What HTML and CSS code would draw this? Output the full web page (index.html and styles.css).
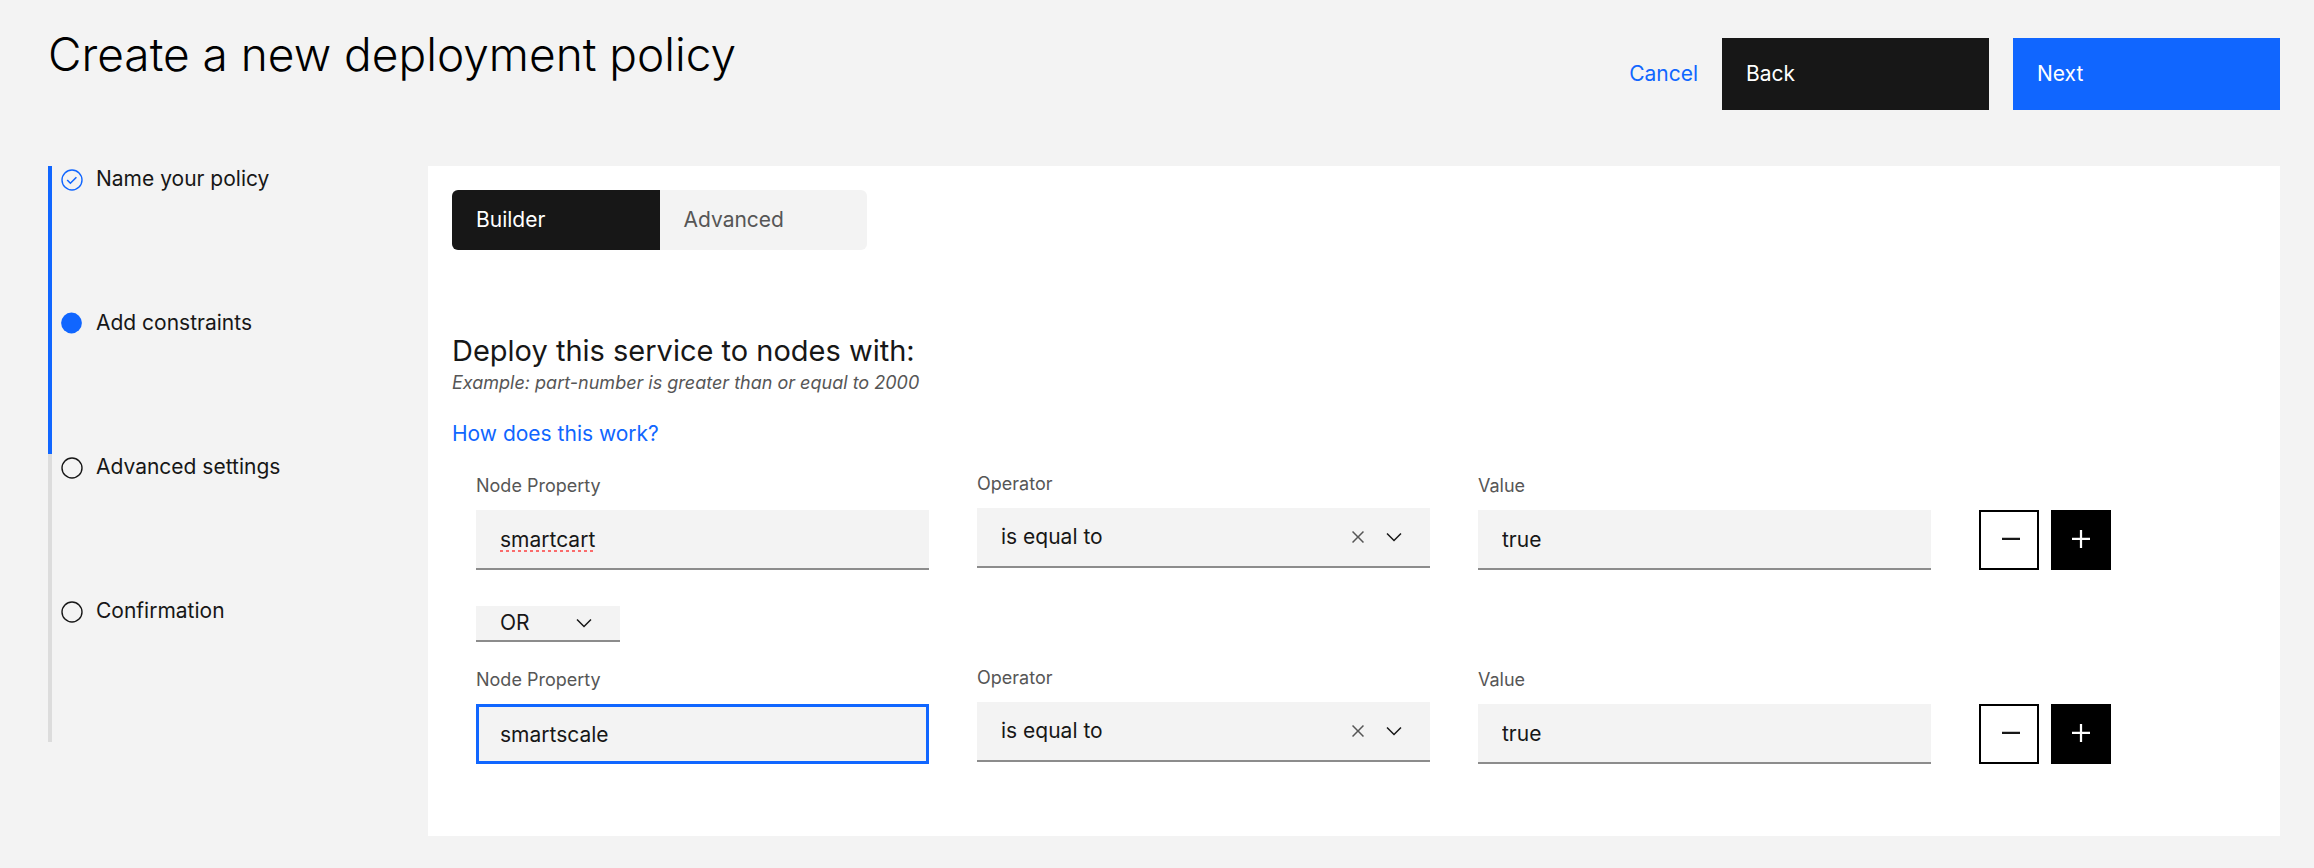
FILE: index.html
```html
<!DOCTYPE html>
<html lang="en">
<head>
<meta charset="utf-8">
<title>Create a new deployment policy</title>
<link rel="stylesheet" href="styles.css">
</head>
<body>
<svg class="sprite" aria-hidden="true">
  <symbol id="chevron" viewBox="0 0 16 16"><path d="M8 11L3 6l.7-.7L8 9.6l4.3-4.3.7.7z"/></symbol>
  <symbol id="close" viewBox="0 0 32 32"><path d="M24 9.4L22.6 8 16 14.6 9.4 8 8 9.4l6.6 6.6L8 22.6 9.4 24l6.6-6.6 6.6 6.6 1.4-1.4-6.6-6.6z"/></symbol>
  <symbol id="minus" viewBox="0 0 32 32"><path d="M8 14h16v2H8z"/></symbol>
  <symbol id="plus" viewBox="0 0 32 32"><path d="M17 14V7h-2v7H8v2h7v7h2v-7h7v-2z"/></symbol>
</svg>
<header class="page-header">
  <h1 class="page-title">Create a new deployment policy</h1>
  <div class="page-actions">
    <a class="link" href="#">Cancel</a>
    <button class="button button-secondary" type="button">Back</button>
    <button class="button button-primary" type="button">Next</button>
  </div>
</header>
<div class="page-body">
  <ol class="steps">
    <li class="step step-reached">
      <svg class="step-icon" viewBox="0 0 22 22"><circle cx="11" cy="11" r="10" fill="none" stroke="currentColor" stroke-width="1.4"/><path d="M6.2 11l3.2 3.2 6-6" fill="none" stroke="currentColor" stroke-width="1.6"/></svg>
      <span class="step-label">Name your policy</span>
    </li>
    <li class="step step-reached" aria-current="step">
      <svg class="step-icon" viewBox="0 0 22 22"><circle cx="10.5" cy="10" r="10.4" fill="currentColor"/></svg>
      <span class="step-label">Add constraints</span>
    </li>
    <li class="step">
      <svg class="step-icon" viewBox="0 0 22 22"><circle cx="11" cy="11" r="10" fill="none" stroke="currentColor" stroke-width="1.4"/></svg>
      <span class="step-label">Advanced settings</span>
    </li>
    <li class="step">
      <svg class="step-icon" viewBox="0 0 22 22"><circle cx="11" cy="11" r="10" fill="none" stroke="currentColor" stroke-width="1.4"/></svg>
      <span class="step-label">Confirmation</span>
    </li>
  </ol>
  <main class="panel">
    <div class="switcher" role="tablist">
      <button class="switch switch-selected" type="button" role="tab" aria-selected="true">Builder</button>
      <button class="switch" type="button" role="tab" aria-selected="false">Advanced</button>
    </div>
    <h2 class="panel-title">Deploy this service to nodes with:</h2>
    <p class="panel-example">Example: part-number is greater than or equal to 2000</p>
    <a class="link" href="#">How does this work?</a>
    <form class="constraints">
      <div class="constraint">
        <div class="field">
          <label class="field-label" for="property-1">Node Property</label>
          <input class="control control-misspelled" id="property-1" type="text" value="smartcart" spellcheck="false">
        </div>
        <div class="field field-select">
          <label class="field-label" for="operator-1">Operator</label>
          <div class="select">
            <select class="control" id="operator-1"><option>is equal to</option></select>
            <div class="select-icons">
              <button class="clear" type="button" aria-label="Clear selection"><svg class="icon"><use href="#close"/></svg></button>
              <svg class="icon"><use href="#chevron"/></svg>
            </div>
          </div>
        </div>
        <div class="field">
          <label class="field-label" for="value-1">Value</label>
          <input class="control" id="value-1" type="text" value="true">
        </div>
        <div class="row-actions">
          <button class="square square-outline" type="button" aria-label="Remove"><svg class="square-icon"><use href="#minus"/></svg></button>
          <button class="square square-solid" type="button" aria-label="Add"><svg class="square-icon"><use href="#plus"/></svg></button>
        </div>
      </div>
      <div class="select select-small">
        <select class="control" aria-label="Join constraints with"><option>OR</option><option>AND</option></select>
        <div class="select-icons"><svg class="icon"><use href="#chevron"/></svg></div>
      </div>
      <div class="constraint">
        <div class="field">
          <label class="field-label" for="property-2">Node Property</label>
          <input class="control control-active" id="property-2" type="text" value="smartscale" spellcheck="false">
        </div>
        <div class="field field-select">
          <label class="field-label" for="operator-2">Operator</label>
          <div class="select">
            <select class="control" id="operator-2"><option>is equal to</option></select>
            <div class="select-icons">
              <button class="clear" type="button" aria-label="Clear selection"><svg class="icon"><use href="#close"/></svg></button>
              <svg class="icon"><use href="#chevron"/></svg>
            </div>
          </div>
        </div>
        <div class="field">
          <label class="field-label" for="value-2">Value</label>
          <input class="control" id="value-2" type="text" value="true">
        </div>
        <div class="row-actions">
          <button class="square square-outline" type="button" aria-label="Remove"><svg class="square-icon"><use href="#minus"/></svg></button>
          <button class="square square-solid" type="button" aria-label="Add"><svg class="square-icon"><use href="#plus"/></svg></button>
        </div>
      </div>
    </form>
  </main>
</div>
</body>
</html>
```
FILE: styles.css
```css
* {
  box-sizing: border-box;
}

body {
  margin: 0;
  padding: 24px 34px 32px 48px;
  background: #f3f3f3;
  color: #171717;
  font: 400 21px/28px Inter, "Noto Sans", sans-serif;
}

button,
input,
select {
  margin: 0;
  border: 0;
  border-radius: 0;
  font: inherit;
  color: inherit;
}

.sprite {
  display: none;
}

.link {
  color: #1066ff;
  text-decoration: none;
}

/* Header */
.page-header {
  display: flex;
  justify-content: space-between;
  align-items: flex-start;
}

.page-title {
  margin: 0;
  color: #000;
  font-size: 46px;
  line-height: 60px;
  font-weight: 300;
}

.page-actions {
  display: flex;
  align-items: center;
  gap: 24px;
  padding-top: 14px;
}

.button {
  width: 267px;
  height: 72px;
  padding: 0 24px;
  color: #fff;
  text-align: left;
}

.button-secondary {
  background: #171717;
}

.button-primary {
  background: #1066ff;
}

.page-body {
  display: flex;
  align-items: flex-start;
  margin-top: 56px;
}

/* Progress */
.steps {
  flex: 0 0 380px;
  margin: 0;
  padding: 0;
  list-style: none;
}

.step {
  display: flex;
  align-items: flex-start;
  gap: 13px;
  height: 144px;
  padding-left: 9px;
  border-left: 4px solid #dcdcdc;
  line-height: 26px;
}

.step-reached {
  border-color: #1066ff;
}

.step-icon {
  width: 22px;
  height: 22px;
  margin-top: 3px;
  overflow: visible;
}

.step-reached .step-icon {
  color: #1066ff;
}

/* Panel */
.panel {
  flex: 1;
  padding: 24px 24px 72px;
  background: #fff;
}

.switcher {
  display: flex;
  width: 415px;
  margin-bottom: 80px;
}

.switch {
  flex: 1;
  height: 60px;
  padding: 0 24px;
  background: #f3f3f3;
  color: #565656;
  text-align: left;
  border-radius: 0 6px 6px 0;
}

.switch-selected {
  background: #171717;
  color: #fff;
  border-radius: 6px 0 0 6px;
}

.panel-title {
  margin: 0;
  font-size: 29px;
  line-height: 42px;
  font-weight: 400;
}

.panel-example {
  margin: 0 0 26px;
  color: #565656;
  font-size: 18px;
  line-height: 22px;
  font-style: italic;
}

.constraints {
  display: flex;
  flex-direction: column;
  padding: 24px 24px 0;
}

.constraint {
  display: grid;
  grid-template-columns: 453fr 453fr 453fr 253fr;
  gap: 48px;
  align-items: end;
}

.field-select {
  padding-bottom: 2px;
}

.field-label {
  display: block;
  margin-bottom: 12px;
  color: #565656;
  font-size: 18px;
  line-height: 24px;
}

.control {
  display: block;
  width: 100%;
  height: 60px;
  padding: 0 24px;
  background: #f3f3f3;
  border-bottom: 2px solid #8c8c8c;
  outline: none;
  appearance: none;
}

.control-active {
  padding: 0 21px;
  border: 3px solid #1066ff;
}

.control-misspelled {
  text-decoration: underline dotted 3px #fa6b6b;
  text-underline-offset: 3px;
  text-decoration-skip-ink: none;
}

.select {
  position: relative;
}

.select-icons {
  position: absolute;
  top: 0;
  right: 24px;
  bottom: 2px;
  display: flex;
  align-items: center;
  gap: 12px;
  pointer-events: none;
}

.clear {
  display: flex;
  padding: 0;
  background: none;
  color: #565656;
  pointer-events: auto;
}

.icon {
  display: block;
  width: 24px;
  height: 24px;
  fill: currentColor;
}

.select-small {
  width: 144px;
  margin: 36px 0 24px;
}

.select-small .control {
  height: 36px;
}

.row-actions {
  display: flex;
  gap: 12px;
}

.square {
  display: grid;
  place-items: center;
  width: 60px;
  height: 60px;
  padding: 0;
  border: 2px solid #000;
}

.square-outline {
  padding-left: 4px;
  background: #fff;
}

.square-solid {
  background: #000;
  color: #fff;
}

.square-icon {
  width: 36px;
  height: 36px;
  fill: currentColor;
}
```
